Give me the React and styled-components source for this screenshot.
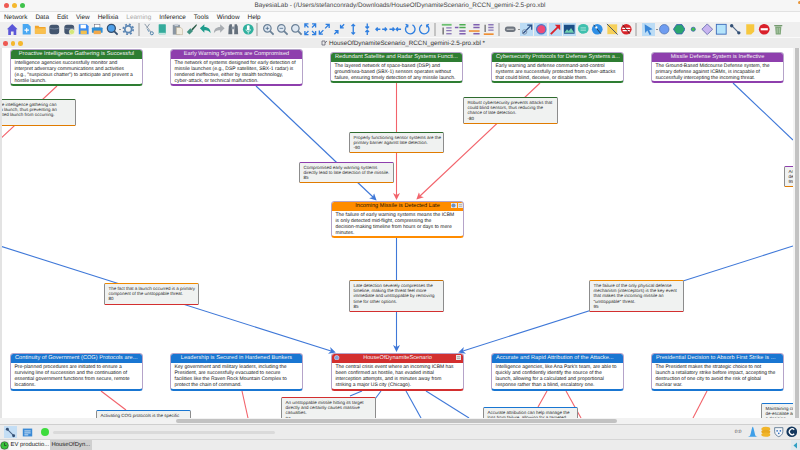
import React from 'react';
import styled, { createGlobalStyle } from 'styled-components';

const GlobalStyle = createGlobalStyle`
    html, body { margin: 0; padding: 0; background: #ececec; overflow: hidden; }
    body {
        font-family: "Liberation Sans", Arial, sans-serif;
        text-rendering: geometricPrecision;
    }
`;

const Page = styled.div`
    width: 800px;
    height: 450px;
    display: flex;
    flex-direction: column;
    overflow: hidden;
    color: #222;
`;

const TitleBar = styled.div`
    height: 11px;
    flex: none;
    display: flex;
    align-items: center;
    justify-content: center;
    position: relative;
    background: #f6f6f6;
    border-bottom: 1px solid #e2e2e2;
    font-size: 6.4px;
    color: #444;
    white-space: nowrap;
`;

const Lights = styled.div`
    position: absolute;
    left: ${p => p.$left}px;
    top: 3px;
    display: flex;
    gap: ${p => p.$gap}px;
`;

const Light = styled.span`
    width: ${p => p.$size}px;
    height: ${p => p.$size}px;
    border-radius: 50%;
    background: ${p => p.$color};
`;

const CornerDot = styled.span`
    position: absolute;
    right: -1px;
    top: 1px;
    width: 3px;
    height: 3px;
    border-radius: 50%;
    background: #e8963a;
`;

const MenuBar = styled.div`
    height: 10px;
    flex: none;
    display: flex;
    align-items: center;
    gap: 8px;
    padding-left: 4px;
    background: #fbfbfb;
    font-size: 6.4px;
`;

const MenuItem = styled.span`
    color: ${p => (p.$off ? '#a8a8a8' : '#222')};
`;

const Toolbar = styled.div`
    height: 15px;
    flex: none;
    display: flex;
    align-items: center;
    padding-left: 5px;
    background: #efefef;
`;

const Slot = styled.div`
    width: ${p => (p.$caret ? 17 : 14.2)}px;
    height: 14px;
    flex: none;
    display: flex;
    align-items: center;
    justify-content: ${p => (p.$caret ? 'flex-start' : 'center')};
    padding-left: ${p => (p.$caret ? 1 : 0)}px;
    box-sizing: border-box;
`;

const IconBox = styled.span`
    width: 13px;
    height: 13px;
    display: flex;
    align-items: center;
    justify-content: center;
    background: ${p => (p.$on ? '#bcdcf5' : 'transparent')};
`;

const Caret = styled.span`
    width: 0;
    height: 0;
    margin-left: 1px;
    border-left: 1.2px solid transparent;
    border-right: 1.2px solid transparent;
    border-top: 1.6px solid #333;
`;

const Sep = styled.span`
    width: 2px;
    height: 13px;
    flex: none;
    margin: 0 ${p => p.$r}px 0 ${p => p.$l}px;
    background: #c4c4c4;
`;

const DocTitle = styled.div`
    height: 11px;
    flex: none;
    position: relative;
    display: flex;
    align-items: center;
    justify-content: center;
    gap: 2px;
    box-sizing: border-box;
    background: #ececec;
    border-top: 1px solid #fafafa;
    font-size: 6.3px;
    color: #333;
    padding-left: 6px;
`;

const Workspace = styled.div`
    height: 370px;
    flex: none;
    display: flex;
    background: #dcdcdc;
`;

const LeftStrip = styled.div`
    width: 2px;
    flex: none;
    background: #e3e3e3;
`;

const Canvas = styled.div`
    width: 791px;
    flex: none;
    position: relative;
    overflow: hidden;
    background: #fff;
`;

const Wires = styled.svg`
    position: absolute;
    inset: 0;
`;

const VScroll = styled.div`
    flex: 1;
    background: #f4f4f4;
    display: flex;
    justify-content: center;
`;

const VThumb = styled.div`
    width: 4px;
    height: 100%;
    background: #c2c2c2;
`;

const HScroll = styled.div`
    height: 6px;
    flex: none;
    background: #f2f2f2;
    padding-left: 176px;
`;

const HThumb = styled.div`
    width: 441px;
    height: 4px;
    margin-top: 1px;
    border-radius: 2px;
    background: #c2c2c2;
`;

const StatusBar = styled.div`
    height: 16px;
    flex: none;
    display: flex;
    align-items: center;
    box-sizing: border-box;
    padding: 0 3px 0 4px;
    background: #ececec;
    border-top: 1px solid #cfcfcf;
    border-bottom: 1px solid #d6d6d6;
`;

const StatusBtn = styled.span`
    width: 13px;
    height: 12px;
    margin-right: 4px;
    display: flex;
    align-items: center;
    justify-content: center;
    background: ${p => (p.$on ? '#c4def5' : 'transparent')};
`;

const GreenDot = styled.span`
    width: 8px;
    height: 8px;
    margin-left: 3px;
    border-radius: 50%;
    background: #3ddc3d;
`;

const SliderTrack = styled.span`
    width: 222px;
    height: 3px;
    margin-left: 4px;
    border-radius: 2px;
    background: #dadada;
`;

const Clock = styled.span`
    margin-left: auto;
    margin-right: 5px;
    font-size: 4.8px;
    color: #444;
`;

const StatusIcons = styled.div`
    display: flex;
    gap: 1.5px;
`;

const TaskBar = styled.div`
    height: 10px;
    flex: none;
    display: flex;
    align-items: center;
    padding-left: 0;
    background: #ececec;
    font-size: 5.9px;
`;

const Tab = styled.span`
    height: 10px;
    display: flex;
    align-items: center;
    width: ${p => p.$w}px;
    padding-left: 1.5px;
    box-sizing: border-box;
    background: ${p => (p.$on ? '#f8f8f8' : '#cfcfcf')};
    white-space: nowrap;
`;

const TaskArrow = styled.span`
    margin-left: auto;
    width: 9px;
    height: 10px;
    display: flex;
    align-items: center;
    justify-content: center;
    background: #dfe9ee;
`;

const NodeBox = styled.div`
    position: absolute;
    left: ${p => p.$x - 2}px;
    top: ${p => p.$y - 48}px;
    width: 133px;
    height: ${p => p.$h}px;
    box-sizing: border-box;
    display: flex;
    flex-direction: column;
    background: #fff;
    border: 1px solid #b5a3c9;
    border-bottom: 2px solid ${p => p.$color};
    border-radius: 3.5px;
    overflow: hidden;
`;

const NodeHead = styled.div`
    height: 9.5px;
    flex: none;
    margin: -1px -1px 0;
    display: flex;
    align-items: center;
    justify-content: ${p => (p.$left ? 'flex-start' : 'center')};
    padding-left: ${p => (p.$left ? 5 : 0)}px;
    background: ${p => p.$color};
    color: ${p => (p.$dark ? '#2a1500' : '#f4f4f4')};
    font-size: 5.6px;
    letter-spacing: 0.04px;
    white-space: nowrap;
    position: relative;
`;

const NodeBody = styled.div`
    padding: 1px 0 0 3.5px;
    font-size: 5px;
    line-height: 6.2px;
    color: #151515;
    white-space: nowrap;
`;

const HeadBadge = styled.span`
    position: absolute;
    top: 1.5px;
    ${p => (p.$side === 'left' ? 'left: 3px;' : `right: ${p.$right}px;`)}
    width: 5.5px;
    height: 5.5px;
    display: flex;
    align-items: center;
    justify-content: center;
    background: ${p => (p.$round ? 'transparent' : '#e8e8e8')};
`;

const NoteBox = styled.div`
    position: absolute;
    left: ${p => p.$x - 2}px;
    top: ${p => p.$y - 48}px;
    width: 95px;
    height: ${p => p.$h}px;
    box-sizing: border-box;
    padding: 2px 0 0 3.5px;
    background: #f0f2f1;
    border: 1px solid #8c8c8c;
    border-top: 1.5px solid ${p => p.$top};
    border-bottom: 1.5px solid ${p => p.$bottom};
    border-radius: 1.5px;
    font-size: 4.5px;
    line-height: 5.2px;
    color: #2b2b2b;
    white-space: nowrap;
    overflow: hidden;
`;

const C = {
    green: '#2e7d32',
    purple: '#8e3fad',
    orange: '#ff8c00',
    red: '#d32f2f',
    blue: '#1976d2',
};

const MENU = ['Network', 'Data', 'Edit', 'View', 'Hellixia', 'Learning', 'Inference', 'Tools', 'Window', 'Help'];

const NODES = [
    { x: 10, y: 49, h: 37, color: C.green, title: 'Proactive Intelligence Gathering is Successful', lines: ['Intelligence agencies successfully monitor and', 'interpret adversary communications and activities', '(e.g., "suspicious chatter") to anticipate and prevent a', 'hostile launch.'] },
    { x: 170, y: 49, h: 37, color: C.purple, title: 'Early Warning Systems are Compromised', lines: ['The network of systems designed for early detection of', 'missile launches (e.g., DSP satellites, SBX-1 radar) is', 'rendered ineffective, either by stealth technology,', 'cyber-attack, or technical malfunction.'] },
    { x: 330, y: 52, h: 31, color: C.green, left: true, title: 'Redundant Satellite and Radar Systems Functi...', lines: ['The layered network of space-based (DSP) and', 'ground/sea-based (SBX-1) sensors operates without', 'failure, ensuring timely detection of any missile launch.'] },
    { x: 491, y: 52, h: 31, color: C.green, left: true, title: 'Cybersecurity Protocols for Defense Systems a...', lines: ['Early warning and defense command-and-control', 'systems are successfully protected from cyber-attacks', 'that could blind, deceive, or disable them.'] },
    { x: 651, y: 52, h: 31, color: C.purple, title: 'Missile Defense System is Ineffective', lines: ['The Ground-Based Midcourse Defense system, the', 'primary defense against ICBMs, is incapable of', 'successfully intercepting the incoming threat.'] },
    { x: 331, y: 201, h: 37, color: C.orange, dark: true, badges: 'late', title: 'Incoming Missile is Detected Late', lines: ['The failure of early warning systems means the ICBM', 'is only detected mid-flight, compressing the', 'decision-making timeline from hours or days to mere', 'minutes.'] },
    { x: 10, y: 353, h: 38, color: C.blue, left: true, title: 'Continuity of Government (COG) Protocols are...', lines: ['Pre-planned procedures are initiated to ensure a', 'surviving line of succession and the continuation of', 'essential government functions from secure, remote', 'locations.'] },
    { x: 170, y: 353, h: 38, color: C.blue, title: 'Leadership is Secured in Hardened Bunkers', lines: ['Key government and military leaders, including the', 'President, are successfully evacuated to secure', 'facilities like the Raven Rock Mountain Complex to', 'protect the chain of command.'] },
    { x: 331, y: 353, h: 38, color: C.red, badges: 'house', title: 'HouseOfDynamiteScenario', lines: ['The central crisis event where an incoming ICBM has', 'been confirmed as hostile, has evaded initial', 'interception attempts, and is minutes away from', 'striking a major US city (Chicago).'] },
    { x: 491, y: 353, h: 38, color: C.blue, left: true, title: 'Accurate and Rapid Attribution of the Attacke...', lines: ['Intelligence agencies, like Ana Park\'s team, are able to', 'quickly and confidently identify the source of the', 'launch, allowing for a calculated and proportional', 'response rather than a blind, escalatory one.'] },
    { x: 651, y: 353, h: 38, color: C.blue, left: true, title: 'Presidential Decision to Absorb First Strike is ...', lines: ['The President makes the strategic choice to not', 'launch a retaliatory strike before impact, accepting the', 'destruction of one city to avoid the risk of global', 'nuclear war.'] },
];

const NOTES = [
    { x: -19, y: 99, h: 27, top: '#2e6b2e', bottom: '#e07b00', lines: ['Proactive intelligence gathering can', 'disrupt a launch, thus preventing an', 'unexpected launch from occurring.'] },
    { x: 349, y: 132, h: 21, top: '#2e6b2e', bottom: '#e07b00', lines: ['Properly functioning sensor systems are the', 'primary barrier against late detection.', '-90'] },
    { x: 463, y: 97, h: 27, top: '#2e6b2e', bottom: '#e07b00', lines: ['Robust cybersecurity prevents attacks that', 'could blind sensors, thus reducing the', 'chance of late detection.', '-80'] },
    { x: 299, y: 162, h: 21, top: C.purple, bottom: '#e07b00', lines: ['Compromised early warning systems', 'directly lead to late detection of the missile.', '85'] },
    { x: 349, y: 280, h: 32, top: '#c96f00', bottom: C.red, lines: ['Late detection severely compresses the', 'timeline, making the threat feel more', 'immediate and unstoppable by removing', 'time for other options.', '85'] },
    { x: 104, y: 283, h: 22, top: '#ef8a00', bottom: C.red, lines: ['The fact that a launch occurred is a primary', 'component of the unstoppable threat.', '80'] },
    { x: 589, y: 280, h: 32, top: '#ef8a00', bottom: C.red, lines: ['The failure of the only physical defense', 'mechanism (interceptors) is the key event', 'that makes the incoming missile an', '"unstoppable" threat.', '95'] },
    { x: 784, y: 166, h: 21, top: C.purple, bottom: '#e07b00', lines: ['An ineffective', 'defense leaves', '95'] },
    { x: 96, y: 410, h: 27, top: C.blue, bottom: '#e07b00', lines: ['Activating COG protocols is the specific'] },
    { x: 281, y: 397, h: 32, top: C.red, bottom: C.red, lines: ['An unstoppable missile hitting its target', 'directly and certainly causes massive', 'casualties.', '97'] },
    { x: 483, y: 407, h: 32, top: C.blue, bottom: C.blue, lines: ['Accurate attribution can help manage the', 'loss from failure, allowing for a targeted'] },
    { x: 761, y: 403, h: 32, top: C.blue, bottom: C.blue, lines: ['Maintaining command', 'de-escalate and', 'a decision'] },
];

// page coordinates of the links, the notes sit on top of them
const RED_LINKS = [
    [57, 86, 0, 139],
    [396.5, 83, 396.5, 195],
    [540, 83, 420, 196],
    [101, 391, 126, 410],
    [242, 391, 248, 418],
    [547, 391, 538, 407],
    [566, 391, 581, 418],
    [707, 391, 693, 418],
];

const BLUE_LINKS = [
    [256, 86, 373, 197],
    [733, 83, 793, 140],
    [396.5, 238, 396.5, 347],
    [0, 246, 331, 351],
    [793, 246, 463, 351],
    [362, 391, 350, 396],
    [381, 391, 375, 399],
    [406, 391, 421, 418],
    [426, 391, 469, 418],
];

const Svg = ({ size = 13, box = 14, children }) => (
    <svg width={size} height={size} viewBox={`0 0 ${box} ${box}`}>{children}</svg>
);

const Mag = ({ mark }) => (
    <>
        <circle cx="6" cy="6" r="4.2" fill="#dfe8f2" stroke="#6c8298" strokeWidth="1.4" />
        <path d="M9 9l4 4" stroke="#6c8298" strokeWidth="2" />
        {mark}
    </>
);

const Arrows = ({ d }) => <path d={d} fill="none" stroke="#2f7fe0" strokeWidth="1.5" />;

const LayoutBars = ({ top, bottom, side }) => (
    <>
        <path d="M2 2h11" stroke={top} strokeWidth="2" />
        <path d="M7 5.5h6M7 8.5h6" stroke={bottom} strokeWidth="1.5" />
        <path d="M7 12h6" stroke={bottom} strokeWidth="1.5" />
        <path d="M3.5 5v8" stroke={side} strokeWidth="1.3" />
    </>
);

const ICONS = {
    home: <path d="M7 1l6 6h-1.5v6.5H8.500V9.500h-3v4H2.500V7H1z" fill="#5b57d8" />,
    add: <><path d="M3 1h6l3 3v9H3z" fill="#4aa8f2" /><path d="M7.500 5.500v5M5 8h5" stroke="#fff" strokeWidth="1.200" /></>,
    open: <><path d="M1 3h4l1 1.500h7V12H1z" fill="#f2a52a" /><path d="M1 6h12v6H1z" fill="#f9c04e" /></>,
    db: <><rect x="1.500" y="2" width="11" height="10.500" rx="3" fill="#44566f" /><path d="M1.500 5.500c3 1.500 8 1.500 11 0" stroke="#7d8ea6" fill="none" /></>,
    dbGo: <><rect x="1.500" y="2" width="11" height="10.500" rx="3" fill="#44566f" /><path d="M1.500 5.500c3 1.500 8 1.500 11 0" stroke="#7d8ea6" fill="none" /><circle cx="10" cy="10" r="3" fill="#d5e87a" stroke="#fff" strokeWidth=".6" /></>,
    save: <><path d="M2 1.500h9l2 2v9H2z" fill="#3d8cf2" /><rect x="4" y="2" width="6" height="4" fill="#fff" /><rect x="4" y="8.500" width="7" height="4" fill="#f3c04e" /></>,
    print: <><rect x="4" y="1.500" width="6" height="4" fill="#fff" stroke="#667" strokeWidth=".6" /><rect x="1" y="5" width="12" height="6" rx="1" fill="#2f8fd8" /><rect x="3" y="8.500" width="8" height="4" fill="#f2a84a" /></>,
    zoomGlobe: <><circle cx="6" cy="6" r="4.500" fill="#4f9fe8" stroke="#334f70" strokeWidth="1.400" /><path d="M9 9l4 4" stroke="#334f70" strokeWidth="2" /></>,
    gear: <><circle cx="7" cy="7" r="3.800" fill="none" stroke="#5d87b4" strokeWidth="2" /><circle cx="7" cy="7" r="5.500" fill="none" stroke="#5d87b4" strokeWidth="2" strokeDasharray="2.200 2.120" /></>,
    cut: <><path d="M3 1l7 9M8.500 1L5 6" stroke="#8c9aa8" strokeWidth="1.100" /><circle cx="11" cy="11.500" r="1.700" fill="none" stroke="#4d7fa8" strokeWidth="1.100" /><path d="M6 7l2 3" stroke="#4d7fa8" /></>,
    copy: <><rect x="3" y="1.500" width="8" height="11" rx=".5" fill="#35ab9c" /><rect x="3" y="11" width="8" height="1.500" fill="#bfe6e0" /></>,
    paste: <><rect x="2" y="2" width="8" height="11" fill="#8a96a2" /><rect x="4" y="1" width="4" height="2.500" fill="#c9cfd6" /><path d="M6 5h5l2 2v6H6z" fill="#f0ece0" stroke="#b9a98a" strokeWidth=".6" /></>,
    brush: <><path d="M13 1L7 7l1.500 1.500L13 3z" fill="#2c5d4a" /><path d="M6 6l-4 4 3 3 4-4z" fill="#3e9080" /></>,
    undo: <path d="M1 6l5-4.500v3c4.500 0 7 2.500 7 7-1.500-2.500-3.500-3.500-7-3.300v2.800z" fill="#1f9c8c" />,
    redo: <path d="M13 6L8 1.500v3c-4.500 0-7 2.500-7 7 1.500-2.500 3.500-3.500 7-3.300v2.800z" fill="#a9adb2" />,
    binoc: <><path d="M2 4l1-2.500h2.500L6 12.500H1.500z" fill="#65707c" /><path d="M12 4l-1-2.500H8.500L8 12.500h4.500z" fill="#65707c" /><rect x="5" y="4" width="4" height="3" fill="#8a94a0" /></>,
    mic: <><circle cx="7" cy="7" r="6" fill="#2fb09e" /><rect x="5.500" y="2.500" width="3" height="6" rx="1.500" fill="#fff" /><path d="M4.500 7c0 3.500 5 3.500 5 0M7 10v2" stroke="#fff" fill="none" strokeWidth=".8" /></>,
    zoomPlus: <Mag mark={<path d="M4 6h4M6 4v4" stroke="#4d6d8c" strokeWidth=".9" />} />,
    zoomMinus: <Mag mark={<path d="M4 6h4" stroke="#4d6d8c" strokeWidth=".9" />} />,
    zoomReset: <Mag />,
    fit: <Arrows d="M1 5V1h4M1 1l4 4M13 5V1H9M13 1L9 5M1 9v4h4M1 13l4-4M13 9v4H9M13 13L9 9" />,
    diagOut: <Arrows d="M8.500 1.500h4v4M12.500 1.500L8 6M1.500 8.500v4h4M1.500 12.500L6 8" />,
    diagIn: <Arrows d="M12.500 1.500L8.500 5.500M8.500 2v3.500H12M1.500 12.500l4-4M2 8.500h3.500V12" />,
    vertOut: <Arrows d="M7 1.500v11M5 3.500l2-2 2 2M5 10.500l2 2 2-2" />,
    vertIn: <Arrows d="M7 .5V6M5 4l2 2 2-2M7 8v5.500M5 10l2-2 2 2" />,
    horOut: <Arrows d="M1 7h5M3 5L1 7l2 2M8 7h5M11 5l2 2-2 2" />,
    horIn: <Arrows d="M.5 7H6M4 5l2 2-2 2M8 7h5.500M10 5L8 7l2 2" />,
    rotL: <Arrows d="M4 2.500a5.300 5.300 0 1 0 5.500-.3M1.800 1.500L4.300 2.500 4 5" />,
    rotR: <Arrows d="M10 2.500a5.300 5.300 0 1 1-5.500-.3M12.200 1.500L9.700 2.500 10 5" />,
    layoutA: <LayoutBars top="#6cc070" bottom="#8c78b8" side="#555" />,
    layoutB: <><path d="M6 2h7M6 5h7" stroke="#4cad52" strokeWidth="1.700" /><path d="M1 5h4M6 9h7M6 12h7" stroke="#7f5fb0" strokeWidth="1.700" /></>,
    layoutC: <><path d="M6 2h7M6 5h7" stroke="#7f5fb0" strokeWidth="1.700" /><path d="M1 9h12" stroke="#f08a2a" strokeWidth="1.700" /><path d="M6 12h7" stroke="#7f5fb0" strokeWidth="1.700" /></>,
    layoutD: <><path d="M2 12.500h11" stroke="#f08a2a" strokeWidth="1.800" /><path d="M7 2h6M7 5h6M7 8h6" stroke="#8c78b8" strokeWidth="1.500" /><path d="M3.500 2v8" stroke="#555" strokeWidth="1.200" /></>,
    oval: <><rect x="1" y="4" width="12" height="6" rx="3" fill="#6f7680" /><path d="M3 7h8" stroke="#e0e0e0" /></>,
    nodeArrow: <><path d="M2 12L11 3M7 2.500h5v5" stroke="#2b4f86" fill="none" strokeWidth="1.400" /><circle cx="4" cy="10" r="2.500" fill="none" stroke="#7d8ea6" /></>,
    pinkDot: <circle cx="7" cy="7" r="5.200" fill="#ee4a78" stroke="#4f78c8" strokeWidth="1.400" />,
    redArrow: <><path d="M2 12.500L11 3.500" stroke="#d9232c" strokeWidth="2" /><path d="M6.500 2H12.500V8z" fill="#d9232c" /></>,
    chart: <><rect x="1" y="2" width="12" height="10" fill="#1d4f86" /><path d="M1.500 11l3-4 2 2 2.500-3.500 3.500 5.500z" fill="#6fd0b0" /></>,
    bubble: <><ellipse cx="7" cy="6.500" rx="6" ry="5.500" fill="#3fc0ae" /><path d="M4 12.500l2-2h2z" fill="#3fc0ae" /><path d="M4 5.500h6M4 8h6" stroke="#d8f4ee" strokeWidth=".8" /></>,
    blueSlash: <><circle cx="7" cy="7" r="6" fill="#2f8fe6" /><path d="M3 2l8 10" stroke="#23415f" strokeWidth="1.100" /><circle cx="6" cy="5" r="1.300" fill="#fff" /></>,
    yellowSlash: <><rect x="1.500" y="1.500" width="11" height="11" fill="#f6d05a" /><path d="M1 1l12 12" stroke="#48566a" strokeWidth="1.100" /></>,
    redEye: <><circle cx="7" cy="7" r="6" fill="#d8232a" /><path d="M2.500 6h9M3 8.500h8" stroke="#fff" strokeWidth="1.300" /><path d="M3 2l8 10" stroke="#3d1a1a" /></>,
    cursor: <path d="M3 1.500l9 5.500-4 1 2.500 4.500-2 .8L6 8.500l-2.500 2.800z" fill="#3a87d8" />,
    circle: <circle cx="7" cy="7" r="5.300" fill="#6f9cf0" stroke="#4a6fb0" strokeWidth=".8" />,
    hexa: <path d="M4 1.800h6l3.500 5.200L10 12.200H4L.5 7z" fill="#2aa56f" stroke="#3a62b0" strokeWidth="1" />,
    smallDot: <circle cx="7" cy="7" r="2.300" fill="#43c04e" stroke="#3a62b0" strokeWidth=".9" />,
    diamond: <path d="M7 1l6 6-6 6-6-6z" fill="#c8b4f0" stroke="#6a6fb0" strokeWidth="1" />,
    square: <rect x="1.500" y="1.500" width="11" height="11" fill="#b5e4fb" stroke="#3a6ab8" strokeWidth="1" />,
    link: <><path d="M3 3l8 8" stroke="#4a6488" strokeWidth="1.300" /><circle cx="3" cy="3" r="1.900" fill="#334f74" /><circle cx="11" cy="11" r="1.900" fill="#334f74" /></>,
    sticky: <path d="M2.500 1.500h9v8l-3.500 3.500H2.500z" fill="#f7c83f" />,
    stop: <><circle cx="7" cy="7" r="6" fill="#d9202a" /><rect x="3" y="5.800" width="8" height="2.400" fill="#fff" /></>,
    trash: <><path d="M3.500 4h7l-.7 9H4.200z" fill="#7fa679" /><path d="M2.500 3h9" stroke="#5e8a58" strokeWidth="1.200" /><path d="M5.800 5.500v6M8.200 5.500v6" stroke="#d9e8d6" strokeWidth=".6" /></>,
};

const TOOLS = [
    ['home'], ['add'], ['open'], ['db'], ['dbGo'], ['save'], ['print'], ['zoomGlobe', 'caret'], ['gear'],
    { sep: [2.400, 1.500] },
    ['cut'], ['copy'], ['paste'], ['brush'], ['undo'], ['redo'], ['binoc'], ['mic'],
    { sep: [1.500, 2.400] },
    ['zoomPlus'], ['zoomMinus'], ['zoomReset'], ['fit'], ['diagOut'], ['diagIn'], ['vertOut'], ['vertIn'], ['horOut'], ['horIn'], ['rotL'], ['rotR'],
    { sep: [3, 2.700] },
    ['layoutA'], ['layoutB'], ['layoutC'], ['layoutD'],
    { sep: [3, 2.200] },
    ['oval', 'caret'], ['nodeArrow', 'on'], ['pinkDot', 'on'], ['redArrow', 'on'], ['chart', 'on'], ['bubble'], ['blueSlash'], ['yellowSlash'], ['redEye'],
    { sep: [2, 3.400] },
    ['cursor', 'caret', 'on'], ['circle'], ['hexa'], ['smallDot'], ['diamond'], ['square'], ['link'], ['sticky'], ['stop'], ['trash'],
];

const ToolButton = ({ name, flags }) => (
    <Slot $caret={flags.includes('caret')}>
        <IconBox $on={flags.includes('on')}>
            <Svg size={12.500}>{ICONS[name]}</Svg>
        </IconBox>
        {flags.includes('caret') && <Caret />}
    </Slot>
);

const Node = ({ node }) => (
    <NodeBox $x={node.x} $y={node.y} $h={node.h} $color={node.color}>
        <NodeHead $color={node.color} $left={node.left} $dark={node.dark}>
            {node.title}
            {node.badges === 'late' && (
                <>
                    <HeadBadge $right={7.500}>
                        <Svg size={5} box={6}><circle cx="3" cy="3" r="2.500" fill="#6f8fc0" /></Svg>
                    </HeadBadge>
                    <HeadBadge $right={1}>
                        <Svg size={5} box={6}><path d="M1 2h4M1 4h4" stroke="#aaa" /></Svg>
                    </HeadBadge>
                </>
            )}
            {node.badges === 'house' && (
                <>
                    <HeadBadge $side="left" $round>
                        <Svg size={5.500} box={6}><circle cx="3" cy="3" r="2.500" fill="#7fa0e0" stroke="#e6eef8" strokeWidth=".6" /></Svg>
                    </HeadBadge>
                    <HeadBadge $right={3}>
                        <Svg size={5} box={6}><path d="M1 2h4M1 4h4" stroke="#999" /></Svg>
                    </HeadBadge>
                </>
            )}
        </NodeHead>
        <NodeBody>
            {node.lines.map(line => <div key={line}>{line}</div>)}
        </NodeBody>
    </NodeBox>
);

const Note = ({ note }) => (
    <NoteBox $x={note.x} $y={note.y} $h={note.h} $top={note.top} $bottom={note.bottom}>
        {note.lines.map(line => <div key={line}>{line}</div>)}
    </NoteBox>
);

const Link = ({ points, color, arrow }) => (
    <line
        x1={points[0]} y1={points[1]} x2={points[2]} y2={points[3]}
        stroke={color}
        strokeWidth="1.100"
        markerEnd={arrow ? `url(#${arrow})` : undefined}
    />
);

const ArrowHead = ({ id, color }) => (
    <marker id={id} viewBox="0 0 8 8" refX="2" refY="4" markerWidth="8" markerHeight="8" markerUnits="userSpaceOnUse" orient="auto">
        <path d="M0 0.500L7 4L0 7.500L2 4z" fill={color} />
    </marker>
);

export default function App() {
    return (
        <Page>
            <GlobalStyle />
            <TitleBar>
                <Lights $left={3.500} $gap={3}>
                    <Light $size={5} $color="#ee5a52" />
                    <Light $size={5} $color="#f5b82e" />
                    <Light $size={5} $color="#3fc24b" />
                </Lights>
                BayesiaLab - (/Users/stefanconrady/Downloads/HouseOfDynamiteScenario_RCCN_gemini-2.5-pro.xbl
                <CornerDot />
            </TitleBar>
            <MenuBar>
                {MENU.map(item => <MenuItem key={item} $off={item === 'Learning'}>{item}</MenuItem>)}
            </MenuBar>
            <Toolbar>
                {TOOLS.map((tool, i) => (
                    tool.sep
                        ? <Sep key={i} $l={tool.sep[0]} $r={tool.sep[1]} />
                        : <ToolButton key={i} name={tool[0]} flags={tool.slice(1)} />
                ))}
            </Toolbar>
            <DocTitle>
                <Lights $left={3} $gap={3}>
                    <Light $size={4.500} $color="#ee5a52" />
                    <Light $size={4.500} $color="#f5b82e" />
                    <Light $size={4.500} $color="#f5b82e" />
                </Lights>
                <Svg size={6} box={6}><path d="M1 1h3v4H1zM4 3l2-2" fill="none" stroke="#556" strokeWidth=".7" /></Svg>
                HouseOfDynamiteScenario_RCCN_gemini-2.5-pro.xbl *
            </DocTitle>
            <Workspace>
                <LeftStrip />
                <Canvas>
                    <Wires width="791" height="370" viewBox="2 48 791 370">
                        <defs>
                            <ArrowHead id="headRed" color="#f2636b" />
                            <ArrowHead id="headBlue" color="#3f78d8" />
                        </defs>
                        {RED_LINKS.map((p, i) => (
                            <Link key={i} points={p} color="#f2636b" arrow={p[3] > 190 && p[3] < 200 ? 'headRed' : undefined} />
                        ))}
                        {BLUE_LINKS.map((p, i) => (
                            <Link key={i} points={p} color="#3f78d8" arrow={i === 0 || (i >= 2 && i <= 4) ? 'headBlue' : undefined} />
                        ))}
                    </Wires>
                    {NOTES.map(note => <Note key={note.lines[0]} note={note} />)}
                    {NODES.map(node => <Node key={node.title} node={node} />)}
                </Canvas>
                <VScroll><VThumb /></VScroll>
            </Workspace>
            <HScroll><HThumb /></HScroll>
            <StatusBar>
                <StatusBtn $on>
                    <Svg size={11}>{ICONS.link}</Svg>
                </StatusBtn>
                <StatusBtn>
                    <Svg size={11}><rect x="1" y="2" width="12" height="10" fill="#3a8ad6" /><path d="M3 5h8M3 7.500h8M3 10h5" stroke="#fff" /></Svg>
                </StatusBtn>
                <GreenDot />
                <SliderTrack />
                <Clock>0:0</Clock>
                <StatusIcons>
                    <Svg size={11.500}><path d="M1 13c3 0 3-2 4-6s1.500-6 2-6 1 2 2 6 1 6 4 6z" fill="#3f9fe8" /></Svg>
                    <Svg size={11.500}><ellipse cx="7" cy="3.500" rx="5.500" ry="2.500" fill="#f1b52a" /><ellipse cx="7" cy="7" rx="5.500" ry="2.500" fill="#e8a820" /><ellipse cx="7" cy="10.500" rx="5.500" ry="2.500" fill="#f1b52a" /></Svg>
                    <Svg size={11.500}><path d="M2 2h10v5c0 3-2.500 5-5 6-2.500-1-5-3-5-6z" fill="#f4f6fa" stroke="#54708c" /><circle cx="5" cy="6" r="1" fill="#2f70c0" /><circle cx="9" cy="6" r="1" fill="#2f70c0" /><circle cx="7" cy="9" r="1" fill="#2f70c0" /></Svg>
                    <Svg size={11.500}><circle cx="7" cy="7" r="6.500" fill="#12365c" /><path d="M10 4.500A3.500 3.500 0 1 0 10 9.500" fill="none" stroke="#fff" strokeWidth="1.500" /></Svg>
                </StatusIcons>
            </StatusBar>
            <TaskBar>
                <Svg size={9}><circle cx="7" cy="7" r="6" fill="#38c23c" stroke="#222" strokeWidth=".7" /><path d="M7 3v4h3" stroke="#222" fill="none" /></Svg>
                <Tab $w={41} $on>EV productio...</Tab>
                <Tab $w={42}>HouseOfDyn...</Tab>
                <TaskArrow>
                    <Svg size={7}><path d="M10 1v12L3 7z" fill="#2f9fc4" /></Svg>
                </TaskArrow>
            </TaskBar>
        </Page>
    );
}
